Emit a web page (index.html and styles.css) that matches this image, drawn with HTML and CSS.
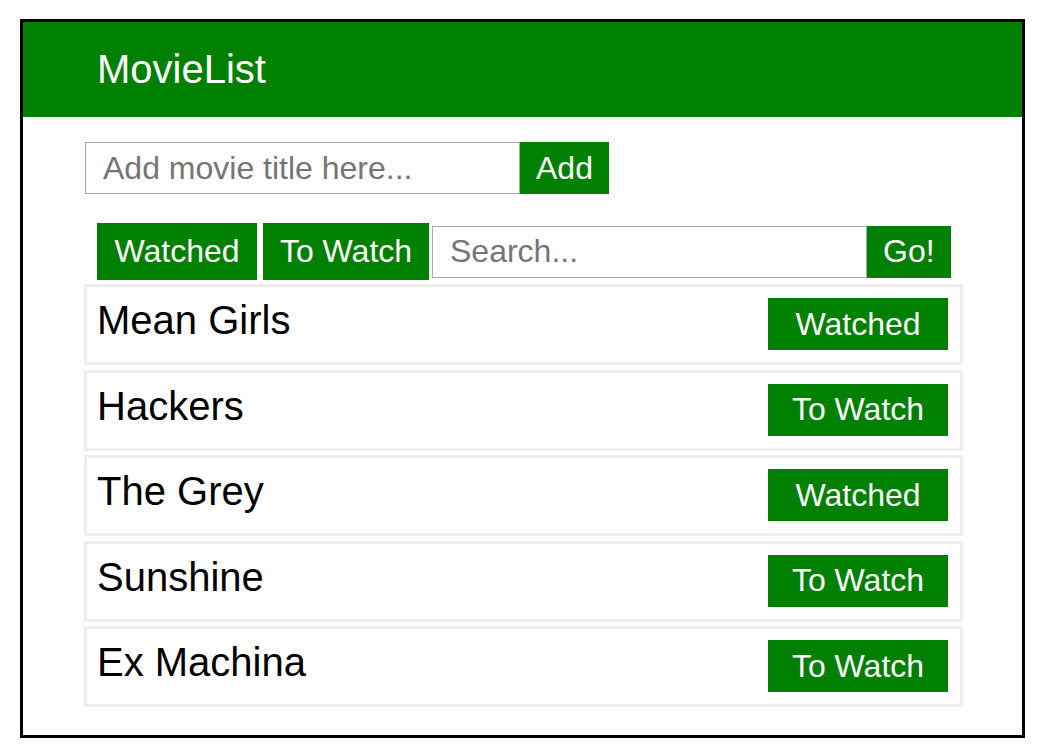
FILE: index.html
```html
<!DOCTYPE html>
<html lang="en">
<head>
<meta charset="utf-8">
<title>MovieList</title>
<link rel="stylesheet" href="styles.css">
</head>
<body>
<div class="app">
  <header class="topbar">
    <h1 class="brand">MovieList</h1>
  </header>
  <main class="content">
    <form class="add-row">
      <input class="text-input" type="text" placeholder="Add movie title here...">
      <button class="btn btn-small" type="button">Add</button>
    </form>
    <div class="filter-row">
      <button class="btn btn-tab" type="button">Watched</button>
      <button class="btn btn-tab" type="button">To Watch</button>
      <input class="text-input search-input" type="text" placeholder="Search...">
      <button class="btn btn-small" type="button">Go!</button>
    </div>
    <ul class="movies">
      <li class="movie"><span class="movie-title">Mean Girls</span><button class="btn btn-status" type="button">Watched</button></li>
      <li class="movie"><span class="movie-title">Hackers</span><button class="btn btn-status" type="button">To Watch</button></li>
      <li class="movie"><span class="movie-title">The Grey</span><button class="btn btn-status" type="button">Watched</button></li>
      <li class="movie"><span class="movie-title">Sunshine</span><button class="btn btn-status" type="button">To Watch</button></li>
      <li class="movie"><span class="movie-title">Ex Machina</span><button class="btn btn-status" type="button">To Watch</button></li>
    </ul>
  </main>
</div>
</body>
</html>
```
FILE: styles.css
```css
* {
  box-sizing: border-box;
}

body {
  margin: 0;
  background: #ffffff;
  font-family: "Liberation Sans", Arial, sans-serif;
  color: #000000;
}

.app {
  margin: 19px 0 0 20px;
  width: 1005px;
  height: 719px;
  border: 3px solid #000000;
  background: #ffffff;
}

.topbar {
  height: 95px;
  background: #008000;
  display: flex;
  align-items: center;
  padding-left: 74px;
}

.brand {
  margin: 0;
  font-size: 40px;
  font-weight: normal;
  color: #ffffff;
}

.content {
  padding: 25px 0 0 61px;
}

.add-row {
  display: flex;
  margin: 0 0 0 1px;
  height: 52px;
}

.text-input {
  width: 435px;
  height: 52px;
  border: 1px solid #a9a9a9;
  padding: 0 17px;
  font-family: "Liberation Sans", Arial, sans-serif;
  font-size: 32px;
  color: #000000;
  background: #ffffff;
  outline: none;
}

.text-input::placeholder {
  color: #757575;
}

.btn {
  border: none;
  background: #008000;
  color: #ffffff;
  font-family: "Liberation Sans", Arial, sans-serif;
  font-size: 32px;
  padding: 0;
  cursor: pointer;
}

.btn-small {
  height: 52px;
  padding: 0 16px;
}

.filter-row {
  display: flex;
  align-items: center;
  margin: 29px 0 0 13px;
  height: 57px;
}

.btn-tab {
  height: 57px;
  padding: 0 16px;
  min-width: 160px;
  margin-right: 6px;
}

.btn-tab + .btn-tab {
  min-width: 166px;
  margin-right: 3px;
}

.movies {
  list-style: none;
  margin: 4px 0 0 0;
  padding: 0;
  width: 879px;
  display: flex;
  flex-direction: column;
  gap: 4.5px;
}

.movie {
  height: 81px;
  border: 3px solid #eeeeee;
  padding: 11px 12px 0 10px;
  display: flex;
  justify-content: space-between;
  align-items: flex-start;
}

.movie-title {
  font-size: 40px;
  line-height: 46px;
  margin-top: -1px;
}

.btn-status {
  width: 180px;
  height: 52px;
}
```
